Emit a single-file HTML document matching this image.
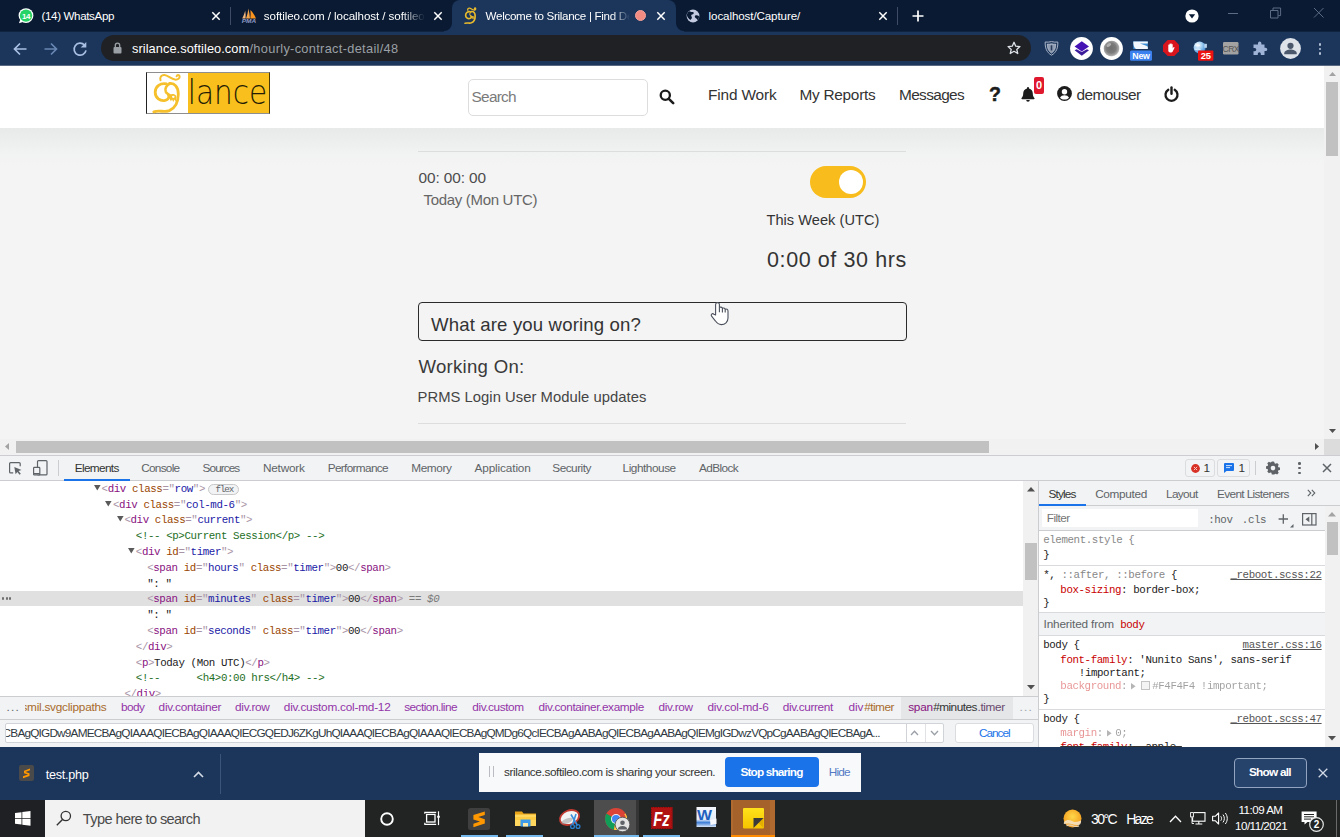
<!DOCTYPE html>
<html lang="en">
<head>
<meta charset="utf-8">
<title>Welcome to Srilance | Find Developers</title>
<style>
*{box-sizing:border-box;margin:0;padding:0}
html,body{width:1340px;height:837px;overflow:hidden;background:#f4f4f4}
body{position:relative;font-family:"Liberation Sans",sans-serif;color:#333}
.t{position:absolute;white-space:pre;line-height:1}
svg{position:absolute;overflow:visible}
</style>
</head>
<body>
<!-- sec_chrome -->
<div style="position:absolute;left:0px;top:0px;width:1340px;height:32px;background:#091a32;"></div>
<div style="position:absolute;left:0px;top:31px;width:1340px;height:35px;background:#1b355b;"></div>
<div style="position:absolute;left:0px;top:31px;width:444px;height:1px;background:#10243f;"></div>
<div style="position:absolute;left:684px;top:31px;width:656px;height:1px;background:#10243f;"></div>
<div style="position:absolute;left:452px;top:0px;width:224px;height:32px;background:#1b355b;border-radius:8px 8px 0 0;"></div>
<svg style="left:444px;top:23px;" width="8" height="8" viewBox="0 0 8 8"><path d="M8 0v8H0A8 8 0 0 0 8 0z" fill="#1b355b"/></svg>
<svg style="left:676px;top:23px;" width="8" height="8" viewBox="0 0 8 8"><path d="M0 0v8h8A8 8 0 0 1 0 0z" fill="#1b355b"/></svg>
<svg style="left:18px;top:8px;" width="16" height="16" viewBox="0 0 16 16"><circle cx="8" cy="7.6" r="7.4" fill="#fff"/><path d="M1 15.2l1.3-4 2.6 2.8z" fill="#fff"/><circle cx="8" cy="7.6" r="6.2" fill="#25d366"/><text x="8" y="10.6" font-family="Liberation Sans, sans-serif" font-size="8" font-weight="700" fill="#fff" text-anchor="middle" letter-spacing="-0.4">14</text></svg>
<span class="t" style="left:41.50px;top:10px;font-size:11.6px;letter-spacing:-0.365px;color:#fff;">(14) WhatsApp</span>
<svg style="left:210px;top:10px;" width="12" height="12" viewBox="0 0 12 12"><path d="M2.3 2.3L9.7 9.7M9.7 2.3L2.3 9.7" stroke="#fff" stroke-width="1.5" fill="none"/></svg>
<div style="position:absolute;left:230px;top:7px;width:1px;height:18px;background:#3f4c63;"></div>
<svg style="left:241px;top:8px;" width="16" height="16" viewBox="0 0 16 16"><path d="M1.200 10.400C2.600 8 3.600 5.500 4.200 2.600c.5 2.800.6 5.300.4 7.800z" fill="#f2b67c"/><path d="M5 10.400C6.300 7.300 7 4 7.300.600c.9 3.300 1.500 6.600 1.700 9.800z" fill="#f5a347"/><path d="M9.300 10.400c.4-2.800.4-5.600.1-8.400 2.400 2.400 4.300 5.200 5.600 8.400z" fill="#f7931e"/><text x="8" y="15.300" font-family="Liberation Sans, sans-serif" font-size="5.800" font-weight="700" font-style="italic" fill="#8e99c4" text-anchor="middle" textLength="14.500" lengthAdjust="spacingAndGlyphs">PMA</text></svg>
<div style="position:absolute;left:262px;top:0;width:164px;height:32px;overflow:hidden;-webkit-mask-image:linear-gradient(90deg,#000 140px,transparent 163px);mask-image:linear-gradient(90deg,#000 140px,transparent 163px)"><span class="t" style="left:1.80px;top:10px;font-size:11.6px;letter-spacing:-0.080px;color:#fff;">softileo.com / localhost / softileo.com</span></div>
<svg style="left:432px;top:10px;" width="12" height="12" viewBox="0 0 12 12"><path d="M2.3 2.3L9.7 9.7M9.7 2.3L2.3 9.7" stroke="#fff" stroke-width="1.5" fill="none"/></svg>
<svg style="left:460.6px;top:6.2px;" width="21" height="19" viewBox="0 0 21 19"><g transform="scale(.413)"><g fill="none" stroke="#e9ba2b" stroke-linecap="round" stroke-linejoin="round"><path d="M16.500 10.300C15.500 7 17.500 4.800 20.500 5c3.500.2 6.500 4.200 10.500 4.600 3 .3 5-1.400 4.600-3.400-.4-1.700-2.500-1.700-3 0" stroke-width="3.2"/><path d="M22.500 13.800c-6-1.200-11.300 2.400-11.300 8.400 0 5.800 5 9.300 10 8.200 3-.7 4.500-3.300 3.200-5.400" stroke-width="4"/><path d="M26 13.600c-3.600 1.600-5.600 5.200-4.200 8.200 1.200 2.400 4.200 2.600 5.400 5.200" stroke-width="2.600"/><path d="M25.500 13.500c5-.8 8.800 3.700 8.800 10.500 0 8-3 14-9 16.600-5 2-10-.6-15.500 1.200" stroke-width="4"/></g><path d="M25.800 25c1.500-1.600 5.400-1.300 6.300.8.700 1.700.2 3.800-.5 5.800l-1.300-2-1 2.400-1.200-2.400-1.300 1.600c-1.200-2-2-4.600-1-6.200z" fill="#e9ba2b"/><ellipse cx="29.300" cy="26.800" rx="1.300" ry="1.100" fill="#1b355b"/></g></svg>
<div style="position:absolute;left:484px;top:0;width:150px;height:32px;overflow:hidden;-webkit-mask-image:linear-gradient(90deg,#000 128px,transparent 146px);mask-image:linear-gradient(90deg,#000 128px,transparent 146px)"><span class="t" style="left:1.60px;top:10px;font-size:11.6px;letter-spacing:-0.300px;color:#fff;">Welcome to Srilance | Find Developers</span></div>
<svg style="left:634px;top:9px;" width="13" height="13" viewBox="0 0 13 13"><circle cx="6.5" cy="6.5" r="5" fill="#f28b82" stroke="#f4a29b" stroke-width="1"/></svg>
<svg style="left:654.5px;top:10px;" width="12" height="12" viewBox="0 0 12 12"><path d="M2.3 2.3L9.7 9.7M9.7 2.3L2.3 9.7" stroke="#fff" stroke-width="1.5" fill="none"/></svg>
<svg style="left:686px;top:9px;" width="14" height="14" viewBox="0 0 14 14"><circle cx="7" cy="7" r="6.4" fill="#c4cbe0"/><path d="M3.200 2.200c1.400.3 2 .9 3.300.8 1.200-.1 1.700 1 1 1.800-.7.700-2 .500-2.300 1.600-.2.900.9 1.300.7 2.300-.2.900-1 1.700-1.600 2.200-1.500-1-2.800-2.400-3.300-4.400C.7 5 1.700 3 3.200 2.200zM9.300 6.600c.9-.5 2.300-.3 3.600.3.300 1.300-.2 3-1.200 4.200-.6-.6-.6-1.400-1.500-1.700-1.300-.5-2-2.100-.9-2.800z" fill="#091a32"/></svg>
<span class="t" style="left:708.60px;top:10px;font-size:11.6px;letter-spacing:-0.107px;color:#fff;">localhost/Capture/</span>
<svg style="left:877px;top:10px;" width="12" height="12" viewBox="0 0 12 12"><path d="M2.3 2.3L9.7 9.7M9.7 2.3L2.3 9.7" stroke="#fff" stroke-width="1.5" fill="none"/></svg>
<div style="position:absolute;left:897px;top:7px;width:1px;height:18px;background:#3f4c63;"></div>
<svg style="left:912px;top:10px;" width="12" height="12" viewBox="0 0 12 12"><path d="M6 .5v11M.5 6h11" stroke="#fff" stroke-width="1.7"/></svg>
<svg style="left:1185px;top:9px;" width="14" height="14" viewBox="0 0 14 14"><circle cx="7" cy="7" r="6.600" fill="#fff"/><path d="M3.800 5.200h6.400L7 9.600z" fill="#091a32"/></svg>
<div style="position:absolute;left:1228px;top:13px;width:10px;height:1px;background:#5d6c84;"></div>
<svg style="left:1270px;top:7px;" width="12" height="12" viewBox="0 0 12 12"><path d="M.5 3.500h7.500v7.500h-7.500zM3 3.300V1h7.600v7.600H8.300" fill="none" stroke="#5d6c84" stroke-width="1"/></svg>
<svg style="left:1313px;top:7px;" width="12" height="12" viewBox="0 0 12 12"><path d="M1 1l9.500 9.500M10.500 1L1 10.500" fill="none" stroke="#5d6c84" stroke-width="1"/></svg>
<svg style="left:13px;top:41.5px;" width="15" height="14" viewBox="0 0 15 14"><path d="M13.500 7H1.800M7 1.500L1.500 7 7 12.500" fill="none" stroke="#a9c0e3" stroke-width="1.700"/></svg>
<svg style="left:43px;top:41.5px;" width="15" height="14" viewBox="0 0 15 14"><path d="M1.500 7h11.700M8 1.500L13.500 7 8 12.500" fill="none" stroke="#6a87b3" stroke-width="1.700"/></svg>
<svg style="left:72px;top:40.5px;" width="16" height="16" viewBox="0 0 16 16"><path d="M12.600 4.200A6 6 0 1 0 14 9.300" fill="none" stroke="#a9c0e3" stroke-width="1.700"/><path d="M14.300 1v5.600H8.700z" fill="#a9c0e3"/></svg>
<div style="position:absolute;left:100.5px;top:35px;width:930px;height:26px;background:#202124;border-radius:13px;"></div>
<div style="position:absolute;left:0px;top:65px;width:1340px;height:1px;background:#5a6983;"></div>
<svg style="left:113px;top:42px;" width="9" height="12" viewBox="0 0 9 12"><rect x=".5" y="5" width="8" height="6.500" rx="1" fill="#9aa0a6"/><path d="M2.300 5V3.400a2.200 2.200 0 0 1 4.400 0V5" fill="none" stroke="#9aa0a6" stroke-width="1.300"/></svg>
<span class="t" style="left:132.00px;top:43px;font-size:12.8px;letter-spacing:0.062px;color:#fff;">srilance.softileo.com</span>
<span class="t" style="left:249.50px;top:43px;font-size:12.8px;letter-spacing:0.311px;color:#9aa0a6;">/hourly-contract-detail/48</span>
<svg style="left:1007px;top:41px;" width="14" height="14" viewBox="0 0 14 14"><path d="M7 1.300l1.750 3.900 4.200.4-3.200 2.800 1 4.100L7 10.300 3.250 12.500l1-4.100L1.050 5.600l4.200-.4z" fill="none" stroke="#dfe3ea" stroke-width="1.300" stroke-linejoin="round"/></svg>
<svg style="left:1044px;top:40px;" width="15" height="16" viewBox="0 0 15 16"><path d="M7.500 1.600C5.500 2.200 3 2.300 1.200 2c-.3 5.500 1.300 10.500 6.300 13.200C12.500 12.500 14.100 7.500 13.800 2c-1.800.3-4.300.2-6.300-.4z" fill="#1b3459" stroke="#a9b5c8" stroke-width="1"/><path d="M7.500 3.800C6.200 4.200 4.600 4.300 3.300 4.100c-.1 3.800 1 7 4.200 9 3.200-2 4.300-5.200 4.200-9-1.300.2-2.900.1-4.200-.3z" fill="#8f9cb2" stroke="#c5cedb" stroke-width=".7"/><rect x="6.700" y="5.300" width="1.600" height="5.200" rx=".3" fill="#2b3d5c"/></svg>
<svg style="left:1069.5px;top:36.5px;" width="23" height="23" viewBox="0 0 23 23"><circle cx="11.500" cy="11.500" r="11.400" fill="#fff"/><path d="M4.600 13.300l2-1 5.200 2.700 5.200-2.700 2 1-7.200 5.500z" fill="#3b1d9c"/><path d="M11.800 4.300l7.200 5.300-7.200 5-7.200-5z" fill="#4512b4"/></svg>
<svg style="left:1099.5px;top:36.5px;" width="23" height="23" viewBox="0 0 23 23"><defs><radialGradient id="gs" cx=".46" cy=".46" r=".56"><stop offset="0" stop-color="#6f6f6f"/><stop offset=".55" stop-color="#7c7c7c"/><stop offset=".85" stop-color="#a9a9a9"/><stop offset="1" stop-color="#fff"/></radialGradient></defs><circle cx="11.500" cy="11.500" r="11.400" fill="#fff"/><circle cx="11.700" cy="11.700" r="8" fill="url(#gs)"/><ellipse cx="8.800" cy="8" rx="2.600" ry="1.600" transform="rotate(-35 8.800 8)" fill="#bdbdbd" opacity=".8"/></svg>
<svg style="left:1130px;top:40px;" width="22" height="21" viewBox="0 0 22 21"><rect x="3.300" y="1.400" width="14.500" height="7.600" fill="#3f8fd6"/><path d="M3.300 1.400h14.500v2H10c2.500 1.400 6 1.400 7.800 3.400v2.200H6C3.800 7.500 3.300 4.500 3.300 1.400z" fill="#f4f7fb"/><rect x="0" y="10.400" width="22" height="10.400" rx="1.500" fill="#3b82f0"/><text x="11" y="18.600" font-family="Liberation Sans, sans-serif" font-size="8.800" font-weight="700" fill="#fff" text-anchor="middle" letter-spacing="-0.2">New</text></svg>
<svg style="left:1163px;top:40px;" width="16" height="16" viewBox="0 0 16 16"><path d="M4.700 0h6.600L16 4.700v6.600L11.300 16H4.700L0 11.300V4.700z" fill="#d8141c"/><path d="M5.300 8.800V5.200c0-.8 1.100-.8 1.100 0V4.200c0-.8 1.100-.8 1.100 0v-.4c0-.8 1.100-.8 1.100 0v.8c0-.8 1.100-.8 1.100 0v4l.8-1.300c.4-.6 1.300-.1.900.6l-1.700 3.600c-.4.800-1 1.100-1.900 1.100H7.300c-1.200 0-2-.9-2-2z" fill="#fff"/></svg>
<svg style="left:1193px;top:40px;" width="21" height="21" viewBox="0 0 21 21"><defs><radialGradient id="gl" cx=".35" cy=".3" r=".8"><stop offset="0" stop-color="#fff"/><stop offset=".45" stop-color="#9fcdf2"/><stop offset="1" stop-color="#2f7fd0"/></radialGradient></defs><circle cx="6.600" cy="7.500" r="6" fill="url(#gl)"/><path d="M2 5c2-.5 3 1 5 .5M1.500 9c2 .8 4-.5 6 .5" stroke="#fff" stroke-width="1" fill="none" opacity=".8"/><rect x="11.300" y="3.800" width="2.600" height="4" fill="#b9d3ee"/><rect x="5" y="10.400" width="15.400" height="10.400" rx="1" fill="#ee1111"/><text x="12.700" y="19" font-family="Liberation Sans, sans-serif" font-size="9.400" font-weight="700" fill="#fff" text-anchor="middle" letter-spacing="-0.2">25</text></svg>
<svg style="left:1222.5px;top:42px;" width="15.5" height="12.5" viewBox="0 0 15.5 12.5"><rect width="15.500" height="12.500" rx="1.200" fill="#a2a2a2"/><text x="7.750" y="9.800" font-family="Liberation Sans, sans-serif" font-size="8.600" fill="#565656" text-anchor="middle" letter-spacing="-0.5">CRX</text></svg>
<svg style="left:1252px;top:41px;" width="16" height="15" viewBox="0 0 16 15"><path d="M6 2.200a1.700 1.700 0 0 1 3.400 0V3.500h3.100v3.200h1.100a1.700 1.700 0 0 1 0 3.400h-1.100V14H8.800v-1.200a1.500 1.500 0 0 0-3 0V14H1.500v-3.800h1.200a1.600 1.600 0 0 0 0-3.200H1.500V3.500H6z" fill="#9fb4d6"/></svg>
<svg style="left:1279.5px;top:37.5px;" width="21" height="21" viewBox="0 0 21 21"><circle cx="10.500" cy="10.500" r="10.400" fill="#dee3ea"/><circle cx="10.500" cy="7.800" r="3.100" fill="#4b586c"/><path d="M4.300 15.300c0-2.600 3.600-3.700 6.200-3.700s6.200 1.100 6.200 3.700v1H4.300z" fill="#4b586c"/></svg>
<div style="position:absolute;left:1318.6px;top:43.1px;width:2.8px;height:2.8px;background:#b3c0d6;border-radius:50%;"></div>
<div style="position:absolute;left:1318.6px;top:47.6px;width:2.8px;height:2.8px;background:#b3c0d6;border-radius:50%;"></div>
<div style="position:absolute;left:1318.6px;top:52.1px;width:2.8px;height:2.8px;background:#b3c0d6;border-radius:50%;"></div>
<!-- sec_page -->
<div style="position:absolute;left:0px;top:66px;width:1325px;height:374px;background:#f4f4f4;"></div>
<div style="position:absolute;left:0px;top:128px;width:1325px;height:38px;background:linear-gradient(#e8eaea,#eceded 30%,#f1f2f2 65%,#f4f4f4);"></div>
<div style="position:absolute;left:0px;top:66px;width:1325px;height:62px;background:#fff;"></div>
<div style="position:absolute;left:146px;top:72px;width:124px;height:42px;background:#fff;border:1px solid #8e8e8e;border-left-color:#222;border-right-color:#4a3a08;"></div>
<div style="position:absolute;left:188px;top:73px;width:81px;height:40px;background:#f9bf1c;"></div>
<svg style="left:144px;top:70px;" width="50" height="46" viewBox="0 0 50 46"><g fill="none" stroke="#f5c02c" stroke-linecap="round" stroke-linejoin="round"><path d="M16.500 10.300C15.500 7 17.500 4.800 20.500 5c3.500.2 6.500 4.200 10.500 4.600 3 .3 5-1.400 4.600-3.400-.4-1.700-2.500-1.700-3 0" stroke-width="2"/><path d="M22.500 13.800c-6-1.200-11.300 2.400-11.300 8.400 0 5.800 5 9.300 10 8.200 3-.7 4.500-3.300 3.200-5.400" stroke-width="2.800"/><path d="M26 13.600c-3.600 1.600-5.600 5.200-4.200 8.200 1.200 2.400 4.200 2.600 5.400 5.200" stroke-width="2.600"/><path d="M25.500 13.500c5-.8 8.800 3.700 8.800 10.500 0 8-3 14-9 16.600-5 2-10-.6-15.500 1.200" stroke-width="2.800"/></g><path d="M25.800 25c1.500-1.600 5.400-1.300 6.300.8.700 1.700.2 3.800-.5 5.800l-1.300-2-1 2.400-1.200-2.400-1.300 1.600c-1.200-2-2-4.600-1-6.200z" fill="#f5c02c"/><ellipse cx="29.300" cy="26.800" rx="1.300" ry="1.100" fill="#fff"/></svg>
<svg style="left:188px;top:73px" width="81" height="40" viewBox="0 0 81 40"><text x="-0.3" y="30.6" font-family="DejaVu Sans, Liberation Sans, sans-serif" font-weight="200" font-size="34" fill="#241c05" textLength="79.500" lengthAdjust="spacingAndGlyphs">lance</text></svg>
<div style="position:absolute;left:468px;top:79px;width:180px;height:37px;background:#fff;border:1px solid #ddd;border-radius:5px;"></div>
<span class="t" style="left:471.60px;top:89px;font-size:15.4px;letter-spacing:-0.761px;color:#7a7a7a;">Search</span>
<svg style="left:659px;top:89px;" width="16" height="16" viewBox="0 0 16 16"><circle cx="6.300" cy="6.300" r="4.600" fill="none" stroke="#1c1c1c" stroke-width="2.300"/><path d="M9.800 9.800l4.400 4.400" stroke="#1c1c1c" stroke-width="2.600" stroke-linecap="round"/></svg>
<span class="t" style="left:708.00px;top:87px;font-size:15.4px;letter-spacing:-0.144px;color:#333;">Find Work</span>
<span class="t" style="left:799.50px;top:87px;font-size:15.4px;letter-spacing:-0.276px;color:#333;">My Reports</span>
<span class="t" style="left:899.00px;top:87px;font-size:15.4px;letter-spacing:-0.636px;color:#333;">Messages</span>
<span class="t" style="left:989.00px;top:85px;font-size:19.5px;color:#1c1c1c;font-weight:700;-webkit-text-stroke:.5px #1c1c1c;">?</span>
<svg style="left:1021px;top:86px;" width="14" height="16" viewBox="0 0 14 16"><path d="M7 1a1 1 0 0 1 1 1v.6c2.400.5 3.800 2.500 3.800 5 0 2.500.8 3.600 1.600 4.400.4.400.1 1.200-.5 1.200H1.100c-.6 0-.9-.8-.5-1.200.8-.8 1.600-1.900 1.600-4.400 0-2.500 1.400-4.500 3.800-5V2a1 1 0 0 1 1-1zM5.200 14h3.600a1.800 1.800 0 0 1-3.600 0z" fill="#1c1c1c"/></svg>
<div style="position:absolute;left:1034px;top:77px;width:10px;height:16.5px;background:#e0182d;border-radius:2px;"></div>
<span class="t" style="left:1036.00px;top:80px;font-size:11px;color:#fff;font-weight:700;">0</span>
<svg style="left:1056.5px;top:86.2px;" width="15" height="15" viewBox="0 0 15 15"><circle cx="7.500" cy="7.500" r="7.400" fill="#1c1c1c"/><circle cx="7.500" cy="5.800" r="2.700" fill="#fff"/><path d="M3 11.700c.7-1.700 2.500-2.500 4.500-2.500s3.800.8 4.500 2.500c-1.100 1.200-2.700 1.900-4.500 1.900s-3.400-.7-4.500-1.900z" fill="#fff"/></svg>
<span class="t" style="left:1076.50px;top:87px;font-size:15.4px;letter-spacing:-0.545px;color:#333;">demouser</span>
<svg style="left:1163.5px;top:86px;" width="15" height="16" viewBox="0 0 15 16"><path d="M4.300 3.800A6 6 0 1 0 10.700 3.800" fill="none" stroke="#1c1c1c" stroke-width="2.300" stroke-linecap="round"/><path d="M7.500 1.400v6.400" stroke="#1c1c1c" stroke-width="2.400" stroke-linecap="round"/></svg>
<div style="position:absolute;left:418px;top:151px;width:488px;height:1px;background:#dcdddd;"></div>
<span class="t" style="left:418.50px;top:170px;font-size:15.4px;letter-spacing:-0.100px;color:#4d4d4d;">00: 00: 00</span>
<span class="t" style="left:423.50px;top:192px;font-size:15px;letter-spacing:-0.312px;color:#666;">Today (Mon UTC)</span>
<div style="position:absolute;left:810px;top:166px;width:56px;height:32px;background:#f8bd1c;border-radius:16px;"></div>
<div style="position:absolute;left:838.5px;top:170px;width:24px;height:24px;background:#fff;border-radius:50%;"></div>
<span class="t" style="left:766.50px;top:213px;font-size:14.6px;letter-spacing:0.031px;color:#333;">This Week (UTC)</span>
<span class="t" style="left:767.00px;top:250px;font-size:21.5px;letter-spacing:0.598px;color:#333;">0:00 of 30 hrs</span>
<div style="position:absolute;left:418px;top:302px;width:489px;height:39px;border:1px solid #2b2b2b;border-radius:4px;"></div>
<span class="t" style="left:431.00px;top:316px;font-size:18.6px;letter-spacing:0.142px;color:#333;">What are you woring on?</span>
<span class="t" style="left:418.50px;top:358px;font-size:18.6px;letter-spacing:0.267px;color:#3a3a3a;">Working On:</span>
<span class="t" style="left:417.50px;top:390px;font-size:14.8px;letter-spacing:0.037px;color:#444;">PRMS Login User Module updates</span>
<div style="position:absolute;left:418px;top:423px;width:488px;height:1px;background:#dcdddd;"></div>
<svg style="left:710px;top:302px;" width="20" height="24" viewBox="0 0 20 24"><path d="M5.600 13V2.400c0-2.200 3.800-2.200 3.800 0v2.900c1.400-.3 2.600.1 3 .8 1.100-.2 2.300.1 2.800.9 1.300-.2 2.800.4 2.800 2V16c0 4-3 6.600-6.700 6.600-2.700 0-4.400-1.500-6-3.800l-3.700-4.600c-1.200-1.700.7-3.300 2.300-2z" fill="#fff" stroke="#4b505c" stroke-width="1.100" stroke-linejoin="round"/><path d="M9.400 5.300v5M12.400 6.100v4.400M15.200 7v3.600" stroke="#4b505c" stroke-width="1.100" fill="none"/></svg>
<div style="position:absolute;left:1324px;top:66px;width:16px;height:373px;background:#f1f1f1;"></div>
<div style="position:absolute;left:1326px;top:82px;width:12px;height:74px;background:#c1c1c1;"></div>
<svg style="left:1328.5px;top:72px;" width="7" height="4" viewBox="0 0 7 4"><path d="M3.500 0l3.500 4H0z" fill="#a3a3a3"/></svg>
<svg style="left:1328.5px;top:428.5px;" width="7" height="4" viewBox="0 0 7 4"><path d="M3.500 4L0 0h7z" fill="#505050"/></svg>
<div style="position:absolute;left:0px;top:439px;width:1340px;height:17px;background:#f1f1f1;"></div>
<div style="position:absolute;left:16px;top:441px;width:973px;height:12px;background:#c1c1c1;"></div>
<svg style="left:5.3px;top:443.3px;" width="4" height="7" viewBox="0 0 4 7"><path d="M0 3.500L4 0v7z" fill="#a3a3a3"/></svg>
<svg style="left:1314.5px;top:443.3px;" width="4" height="7" viewBox="0 0 4 7"><path d="M4 3.500L0 0v7z" fill="#505050"/></svg>
<div style="position:absolute;left:1324px;top:439px;width:16px;height:17px;background:#dcdcdc;"></div>
<!-- sec_dev -->
<div style="position:absolute;left:0px;top:455px;width:1340px;height:292px;background:#fff;"></div>
<div style="position:absolute;left:0px;top:455px;width:1340px;height:26px;background:#f1f3f4;border-top:1px solid #cbcdd1;border-bottom:1px solid #cbcdd1;"></div>
<svg style="left:9px;top:462px;" width="13" height="13" viewBox="0 0 13 13"><path d="M11.200 4.200V1.700a1 1 0 0 0-1-1H1.600a1 1 0 0 0-1 1v8.200a1 1 0 0 0 1 1h2.600" fill="none" stroke="#5f6368" stroke-width="1.200"/><path d="M5.300 5l7.200 2.900-3 1.100 2.300 2.800-1.200 1-2.300-2.900-1.700 2.300z" fill="#5f6368"/></svg>
<svg style="left:33px;top:460px;" width="15" height="16" viewBox="0 0 15 16"><rect x="4.500" y=".600" width="9.500" height="14.300" rx="1" fill="none" stroke="#5f6368" stroke-width="1.200"/><rect x=".600" y="7.400" width="6.200" height="7.600" rx=".800" fill="#f1f3f4" stroke="#5f6368" stroke-width="1.200"/><path d="M.600 13.800h6.200" stroke="#5f6368" stroke-width="1.600"/></svg>
<div style="position:absolute;left:58px;top:460px;width:1px;height:16px;background:#cbcdd1;"></div>
<span class="t" style="left:74.80px;top:463px;font-size:11.8px;letter-spacing:-0.668px;color:#333;">Elements</span>
<span class="t" style="left:141.20px;top:463px;font-size:11.8px;letter-spacing:-0.720px;color:#5f6368;">Console</span>
<span class="t" style="left:202.60px;top:463px;font-size:11.8px;letter-spacing:-0.946px;color:#5f6368;">Sources</span>
<span class="t" style="left:263.00px;top:463px;font-size:11.8px;letter-spacing:-0.228px;color:#5f6368;">Network</span>
<span class="t" style="left:327.80px;top:463px;font-size:11.8px;letter-spacing:-0.677px;color:#5f6368;">Performance</span>
<span class="t" style="left:411.20px;top:463px;font-size:11.8px;letter-spacing:-0.381px;color:#5f6368;">Memory</span>
<span class="t" style="left:474.50px;top:463px;font-size:11.8px;letter-spacing:-0.135px;color:#5f6368;">Application</span>
<span class="t" style="left:552.30px;top:463px;font-size:11.8px;letter-spacing:-0.502px;color:#5f6368;">Security</span>
<span class="t" style="left:622.60px;top:463px;font-size:11.8px;letter-spacing:-0.462px;color:#5f6368;">Lighthouse</span>
<span class="t" style="left:699.00px;top:463px;font-size:11.8px;letter-spacing:-0.613px;color:#5f6368;">AdBlock</span>
<div style="position:absolute;left:64px;top:478.5px;width:66px;height:2px;background:#1a73e8;"></div>
<div style="position:absolute;left:1185px;top:459px;width:30px;height:18px;border:1px solid #dadce0;border-radius:3px;"></div>
<svg style="left:1191px;top:463.5px;" width="9" height="9" viewBox="0 0 9 9"><circle cx="4.500" cy="4.500" r="4.400" fill="#d93025"/><path d="M2.900 2.900l3.200 3.200M6.100 2.900L2.900 6.100" stroke="#f6c9c5" stroke-width="1"/></svg>
<span class="t" style="left:1203.60px;top:463px;font-size:11.8px;color:#333;">1</span>
<div style="position:absolute;left:1217px;top:459px;width:33px;height:18px;border:1px solid #dadce0;border-radius:3px;"></div>
<svg style="left:1224px;top:462.5px;" width="10" height="10" viewBox="0 0 10 10"><path d="M1 0h8a1 1 0 0 1 1 1v6a1 1 0 0 1-1 1H2.500L0 10V1a1 1 0 0 1 1-1z" fill="#1a73e8"/><path d="M2 2.600h6M2 4.600h4" stroke="#cfe0fb" stroke-width="1"/></svg>
<span class="t" style="left:1238.50px;top:463px;font-size:11.8px;color:#333;">1</span>
<div style="position:absolute;left:1255px;top:461px;width:1px;height:14px;background:#cbcdd1;"></div>
<svg style="left:1266px;top:461px;" width="14" height="14" viewBox="0 0 14 14"><path d="M7 0l1.300.2.400 1.700 1.200.5 1.500-.900 1.800 1.800-.900 1.500.500 1.200 1.700.400v2.600l-1.700.400-.500 1.200.900 1.500-1.800 1.800-1.500-.900-1.200.500L8.300 13.800H5.700l-.400-1.700-1.200-.500-1.500.900L.800 10.700l.900-1.500-.500-1.200L-.5 7.600V5l1.700-.400.500-1.200L.8 1.900 2.600.1l1.500.9 1.200-.5L5.700-.100z" transform="translate(.5 .6) scale(.93)" fill="#5f6368"/><circle cx="7" cy="7.100" r="2.300" fill="#f1f3f4"/></svg>
<div style="position:absolute;left:1298px;top:462.3px;width:2.6px;height:2.6px;background:#5f6368;border-radius:50%;"></div>
<div style="position:absolute;left:1298px;top:466.9px;width:2.6px;height:2.6px;background:#5f6368;border-radius:50%;"></div>
<div style="position:absolute;left:1298px;top:471.5px;width:2.6px;height:2.6px;background:#5f6368;border-radius:50%;"></div>
<svg style="left:1322px;top:463px;" width="10" height="10" viewBox="0 0 10 10"><path d="M1 1l8 8M9 1L1 9" stroke="#5f6368" stroke-width="1.500"/></svg>
<div style="position:absolute;left:0px;top:591px;width:1023px;height:15px;background:#e0e0e0;"></div>
<div style="position:absolute;left:0;top:481px;width:1023px;height:214.500px;overflow:hidden"><div style="position:absolute;left:0;top:-481px"><span class="t" style="left:101.60px;top:484px;font-family:'Liberation Mono',monospace;font-size:10.8px;letter-spacing:-0.4px;"><span style="color:#a894a6">&lt;</span><span style="color:#881280">div</span><span style="color:#a894a6"> </span><span style="color:#994500">class</span><span style="color:#a894a6">="</span><span style="color:#1a1aa6">row</span><span style="color:#a894a6">"</span><span style="color:#a894a6">&gt;</span></span>
<svg style="left:94.0px;top:485px;" width="7" height="6" viewBox="0 0 7 6"><path d="M0 0h6.600L3.300 5.400z" fill="#5a5a5a"/></svg>
<span class="t" style="left:113.00px;top:500px;font-family:'Liberation Mono',monospace;font-size:10.8px;letter-spacing:-0.4px;"><span style="color:#a894a6">&lt;</span><span style="color:#881280">div</span><span style="color:#a894a6"> </span><span style="color:#994500">class</span><span style="color:#a894a6">="</span><span style="color:#1a1aa6">col-md-6</span><span style="color:#a894a6">"</span><span style="color:#a894a6">&gt;</span></span>
<svg style="left:105.39999999999999px;top:501px;" width="7" height="6" viewBox="0 0 7 6"><path d="M0 0h6.600L3.300 5.400z" fill="#5a5a5a"/></svg>
<span class="t" style="left:124.40px;top:515px;font-family:'Liberation Mono',monospace;font-size:10.8px;letter-spacing:-0.4px;"><span style="color:#a894a6">&lt;</span><span style="color:#881280">div</span><span style="color:#a894a6"> </span><span style="color:#994500">class</span><span style="color:#a894a6">="</span><span style="color:#1a1aa6">current</span><span style="color:#a894a6">"</span><span style="color:#a894a6">&gt;</span></span>
<svg style="left:116.8px;top:516px;" width="7" height="6" viewBox="0 0 7 6"><path d="M0 0h6.600L3.300 5.400z" fill="#5a5a5a"/></svg>
<span class="t" style="left:135.80px;top:531px;font-family:'Liberation Mono',monospace;font-size:10.8px;letter-spacing:-0.4px;"><span style="color:#236e25">&lt;!-- &lt;p&gt;Current Session&lt;/p&gt; --&gt;</span></span>
<span class="t" style="left:135.80px;top:547px;font-family:'Liberation Mono',monospace;font-size:10.8px;letter-spacing:-0.4px;"><span style="color:#a894a6">&lt;</span><span style="color:#881280">div</span><span style="color:#a894a6"> </span><span style="color:#994500">id</span><span style="color:#a894a6">="</span><span style="color:#1a1aa6">timer</span><span style="color:#a894a6">"</span><span style="color:#a894a6">&gt;</span></span>
<svg style="left:128.2px;top:548px;" width="7" height="6" viewBox="0 0 7 6"><path d="M0 0h6.600L3.300 5.400z" fill="#5a5a5a"/></svg>
<span class="t" style="left:147.20px;top:563px;font-family:'Liberation Mono',monospace;font-size:10.8px;letter-spacing:-0.4px;"><span style="color:#a894a6">&lt;</span><span style="color:#881280">span</span><span style="color:#a894a6"> </span><span style="color:#994500">id</span><span style="color:#a894a6">="</span><span style="color:#1a1aa6">hours</span><span style="color:#a894a6">"</span><span style="color:#a894a6"> </span><span style="color:#994500">class</span><span style="color:#a894a6">="</span><span style="color:#1a1aa6">timer</span><span style="color:#a894a6">"</span><span style="color:#a894a6">&gt;</span><span style="color:#222">00</span><span style="color:#a894a6">&lt;/</span><span style="color:#881280">span</span><span style="color:#a894a6">&gt;</span></span>
<span class="t" style="left:147.20px;top:579px;font-family:'Liberation Mono',monospace;font-size:10.8px;letter-spacing:-0.4px;"><span style="color:#222">": "</span></span>
<span class="t" style="left:147.20px;top:594px;font-family:'Liberation Mono',monospace;font-size:10.8px;letter-spacing:-0.4px;"><span style="color:#a894a6">&lt;</span><span style="color:#881280">span</span><span style="color:#a894a6"> </span><span style="color:#994500">id</span><span style="color:#a894a6">="</span><span style="color:#1a1aa6">minutes</span><span style="color:#a894a6">"</span><span style="color:#a894a6"> </span><span style="color:#994500">class</span><span style="color:#a894a6">="</span><span style="color:#1a1aa6">timer</span><span style="color:#a894a6">"</span><span style="color:#a894a6">&gt;</span><span style="color:#222">00</span><span style="color:#a894a6">&lt;/</span><span style="color:#881280">span</span><span style="color:#a894a6">&gt;</span><span style="color:#7a7a7a;font-style:italic"> == $0</span></span>
<span class="t" style="left:147.20px;top:610px;font-family:'Liberation Mono',monospace;font-size:10.8px;letter-spacing:-0.4px;"><span style="color:#222">": "</span></span>
<span class="t" style="left:147.20px;top:626px;font-family:'Liberation Mono',monospace;font-size:10.8px;letter-spacing:-0.4px;"><span style="color:#a894a6">&lt;</span><span style="color:#881280">span</span><span style="color:#a894a6"> </span><span style="color:#994500">id</span><span style="color:#a894a6">="</span><span style="color:#1a1aa6">seconds</span><span style="color:#a894a6">"</span><span style="color:#a894a6"> </span><span style="color:#994500">class</span><span style="color:#a894a6">="</span><span style="color:#1a1aa6">timer</span><span style="color:#a894a6">"</span><span style="color:#a894a6">&gt;</span><span style="color:#222">00</span><span style="color:#a894a6">&lt;/</span><span style="color:#881280">span</span><span style="color:#a894a6">&gt;</span></span>
<span class="t" style="left:135.80px;top:642px;font-family:'Liberation Mono',monospace;font-size:10.8px;letter-spacing:-0.4px;"><span style="color:#a894a6">&lt;/</span><span style="color:#881280">div</span><span style="color:#a894a6">&gt;</span></span>
<span class="t" style="left:135.80px;top:658px;font-family:'Liberation Mono',monospace;font-size:10.8px;letter-spacing:-0.4px;"><span style="color:#a894a6">&lt;</span><span style="color:#881280">p</span><span style="color:#a894a6">&gt;</span><span style="color:#222">Today (Mon UTC)</span><span style="color:#a894a6">&lt;/</span><span style="color:#881280">p</span><span style="color:#a894a6">&gt;</span></span>
<span class="t" style="left:135.80px;top:673px;font-family:'Liberation Mono',monospace;font-size:10.8px;letter-spacing:-0.4px;"><span style="color:#236e25">&lt;!--      &lt;h4&gt;0:00 hrs&lt;/h4&gt; --&gt;</span></span>
<span class="t" style="left:124.40px;top:689px;font-family:'Liberation Mono',monospace;font-size:10.8px;letter-spacing:-0.4px;"><span style="color:#a894a6">&lt;/</span><span style="color:#881280">div</span><span style="color:#a894a6">&gt;</span></span></div></div>
<div style="position:absolute;left:208.4px;top:483.5px;width:30.6px;height:11.5px;background:#f1f3f4;border:1px solid #c8c8c8;border-radius:6px;"></div>
<span class="t" style="left:215.50px;top:485px;font-family:'Liberation Mono',monospace;font-size:9.2px;letter-spacing:-1.1px;"><span style="color:#5f6368">flex</span></span>
<div style="position:absolute;left:2.1999999999999997px;top:597.4px;width:2.2px;height:2.2px;background:#6e6e6e;border-radius:50%;"></div>
<div style="position:absolute;left:5.5px;top:597.4px;width:2.2px;height:2.2px;background:#6e6e6e;border-radius:50%;"></div>
<div style="position:absolute;left:8.8px;top:597.4px;width:2.2px;height:2.2px;background:#6e6e6e;border-radius:50%;"></div>
<div style="position:absolute;left:1023px;top:481px;width:15px;height:214.5px;background:#f1f1f1;"></div>
<div style="position:absolute;left:1025px;top:543px;width:11.6px;height:37px;background:#c1c1c1;"></div>
<svg style="left:1027px;top:486.5px;" width="8" height="5" viewBox="0 0 8 5"><path d="M4 0l4 4.500H0z" fill="#505050"/></svg>
<svg style="left:1027px;top:684.5px;" width="8" height="5" viewBox="0 0 8 5"><path d="M4 4.500L0 0h8z" fill="#505050"/></svg>
<div style="position:absolute;left:1038px;top:481px;width:1px;height:266px;background:#cbcdd1;"></div>
<div style="position:absolute;left:0px;top:695.5px;width:1038px;height:23.5px;background:#f1f3f4;border-top:1px solid #cbcdd1;"></div>
<span class="t" style="left:6.40px;top:702px;font-size:11.8px;letter-spacing:1.272px;color:#5f6368;">...</span>
<div style="position:absolute;left:25px;top:696px;width:90px;height:22px;overflow:hidden"><span class="t" style="left:-3.60px;top:6px;font-size:11.8px;letter-spacing:-0.241px;color:#a86a2c;">smil.svgclippaths</span></div>
<span class="t" style="left:121.00px;top:702px;font-size:11.8px;letter-spacing:-0.561px;color:#9334a8;">body</span>
<span class="t" style="left:158.60px;top:702px;font-size:11.8px;letter-spacing:-0.257px;color:#9334a8;">div.container</span>
<span class="t" style="left:235.10px;top:702px;font-size:11.8px;letter-spacing:-0.295px;color:#9334a8;">div.row</span>
<span class="t" style="left:283.80px;top:702px;font-size:11.8px;letter-spacing:-0.225px;color:#9334a8;">div.custom.col-md-12</span>
<span class="t" style="left:404.20px;top:702px;font-size:11.8px;letter-spacing:-0.514px;color:#9334a8;">section.line</span>
<span class="t" style="left:472.30px;top:702px;font-size:11.8px;letter-spacing:-0.420px;color:#9334a8;">div.custom</span>
<span class="t" style="left:538.60px;top:702px;font-size:11.8px;letter-spacing:-0.378px;color:#9334a8;">div.container.example</span>
<span class="t" style="left:658.60px;top:702px;font-size:11.8px;letter-spacing:-0.345px;color:#9334a8;">div.row</span>
<span class="t" style="left:707.50px;top:702px;font-size:11.8px;letter-spacing:-0.192px;color:#9334a8;">div.col-md-6</span>
<span class="t" style="left:782.70px;top:702px;font-size:11.8px;letter-spacing:-0.362px;color:#9334a8;">div.current</span>
<span class="t" style="left:848.50px;top:702px;font-size:11.8px;letter-spacing:-0.050px;color:#9334a8;">div</span>
<span class="t" style="left:864.20px;top:702px;font-size:11.8px;letter-spacing:-0.509px;color:#a86a2c;">#timer</span>
<div style="position:absolute;left:901.3px;top:696.5px;width:112px;height:22px;background:#e4e6e8;"></div>
<span class="t" style="left:908.20px;top:702px;font-size:11.8px;letter-spacing:-0.240px;color:#881280;">span</span>
<span class="t" style="left:933.20px;top:702px;font-size:11.8px;letter-spacing:-0.524px;color:#333;">#minutes</span>
<span class="t" style="left:977.50px;top:702px;font-size:11.8px;letter-spacing:-0.373px;color:#6a4a6e;">.timer</span>
<span class="t" style="left:1019.40px;top:702px;font-size:11.8px;letter-spacing:1.272px;color:#9aa0a6;">...</span>
<div style="position:absolute;left:0px;top:719px;width:1038px;height:28px;background:#f1f3f4;border-top:1px solid #cbcdd1;"></div>
<div style="position:absolute;left:4.5px;top:723px;width:939.5px;height:20px;background:#fff;border:1px solid #d0d3d7;border-radius:2px;"></div>
<div style="position:absolute;left:6px;top:724px;width:880px;height:18px;overflow:hidden"><span class="t" style="left:-3.40px;top:4px;font-size:11.8px;letter-spacing:-0.808px;color:#303942;">CBAgQIGDw9AMECBAgQIAAAQIECBAgQIAAAQIECGQEDJ6ZKgUhQIAAAQIECBAgQIAAAQIECBAgQMDg6QcIECBAgAABAgQIECBAgAABAgQIEMgIGDwzVQpCgAABAgQIECBAgA...</span></div>
<div style="position:absolute;left:905.5px;top:723px;width:1px;height:20px;background:#d0d3d7;"></div>
<div style="position:absolute;left:924.5px;top:724px;width:1px;height:18px;background:#e0e2e5;"></div>
<svg style="left:910px;top:730px;" width="9" height="6" viewBox="0 0 9 6"><path d="M1 5l3.500-3.800L8 5" fill="none" stroke="#9aa0a6" stroke-width="1.300"/></svg>
<svg style="left:930px;top:730px;" width="9" height="6" viewBox="0 0 9 6"><path d="M1 1l3.500 3.800L8 1" fill="none" stroke="#9aa0a6" stroke-width="1.300"/></svg>
<div style="position:absolute;left:955px;top:723px;width:78.5px;height:20px;background:#fff;border:1px solid #dadce0;border-radius:3px;"></div>
<span class="t" style="left:979.00px;top:728px;font-size:11.8px;letter-spacing:-1.020px;color:#1a73e8;">Cancel</span>
<!-- sec_styles -->
<div style="position:absolute;left:1039px;top:481px;width:301px;height:25px;background:#f1f3f4;border-bottom:1px solid #cbcdd1;"></div>
<span class="t" style="left:1048.60px;top:489px;font-size:11.8px;letter-spacing:-0.885px;color:#333;">Styles</span>
<span class="t" style="left:1095.20px;top:489px;font-size:11.8px;letter-spacing:-0.338px;color:#5f6368;">Computed</span>
<span class="t" style="left:1166.00px;top:489px;font-size:11.8px;letter-spacing:-0.648px;color:#5f6368;">Layout</span>
<span class="t" style="left:1217.00px;top:489px;font-size:11.8px;letter-spacing:-0.629px;color:#5f6368;">Event Listeners</span>
<div style="position:absolute;left:1039px;top:503.8px;width:47px;height:2px;background:#1a73e8;"></div>
<svg style="left:1307px;top:489px;" width="9" height="8" viewBox="0 0 9 8"><path d="M.800 .800l3 3.200-3 3.200M4.800 .800l3 3.200-3 3.200" fill="none" stroke="#5f6368" stroke-width="1.100"/></svg>
<div style="position:absolute;left:1039px;top:506px;width:286px;height:24.5px;background:#f1f3f4;border-bottom:1px solid #cbcdd1;"></div>
<div style="position:absolute;left:1042px;top:509px;width:155.5px;height:18px;background:#fff;"></div>
<span class="t" style="left:1046.80px;top:513px;font-size:11.8px;letter-spacing:-0.557px;color:#757575;">Filter</span>
<span class="t" style="left:1208.20px;top:515px;font-family:'Liberation Mono',monospace;font-size:10.8px;letter-spacing:-0.4px;"><span style="color:#5f6368">:hov</span></span>
<span class="t" style="left:1241.80px;top:515px;font-family:'Liberation Mono',monospace;font-size:10.8px;letter-spacing:-0.4px;"><span style="color:#5f6368">.cls</span></span>
<svg style="left:1278px;top:513.5px;" width="11" height="10" viewBox="0 0 11 10"><path d="M5.300 .300v9.400M.600 5h9.400" stroke="#5f6368" stroke-width="1.300"/></svg>
<svg style="left:1290px;top:524px;" width="4" height="4" viewBox="0 0 4 4"><path d="M3.500 0v3.500H0z" fill="#5f6368"/></svg>
<svg style="left:1302px;top:512.5px;" width="15" height="13" viewBox="0 0 15 13"><rect x=".600" y=".600" width="13.400" height="11.400" fill="none" stroke="#5f6368" stroke-width="1.200"/><path d="M9.800 .600v11.400" stroke="#5f6368" stroke-width="1.200"/><path d="M7.300 3.400v5.800L3.500 6.300z" fill="#5f6368"/></svg>
<div style="position:absolute;left:1325px;top:506px;width:15px;height:241px;background:#f1f1f1;"></div>
<div style="position:absolute;left:1326.5px;top:522px;width:11.5px;height:32.5px;background:#c1c1c1;"></div>
<svg style="left:1328px;top:511.5px;" width="8" height="5" viewBox="0 0 8 5"><path d="M4 0l4 4.500H0z" fill="#a3a3a3"/></svg>
<svg style="left:1328px;top:736px;" width="8" height="5" viewBox="0 0 8 5"><path d="M4 4.500L0 0h8z" fill="#505050"/></svg>
<div style="position:absolute;left:1039px;top:564.5px;width:286px;height:1px;background:#d8dadd;"></div>
<div style="position:absolute;left:1039px;top:612px;width:286px;height:24px;background:#f1f3f4;border-top:1px solid #d8dadd;border-bottom:1px solid #d8dadd;"></div>
<span class="t" style="left:1043.60px;top:619px;font-size:11.8px;letter-spacing:-0.173px;color:#5f6368;">Inherited from</span>
<svg style="left:1130.8px;top:682.5px;" width="5" height="7" viewBox="0 0 5 7"><path d="M0 0l4.600 3.300L0 6.600z" fill="#b5b5b5"/></svg>
<div style="position:absolute;left:1141px;top:681px;width:9px;height:9px;background:#f4f4f4;border:1px solid #c4c4c4;"></div>
<div style="position:absolute;left:1039px;top:709px;width:286px;height:1px;background:#d8dadd;"></div>
<svg style="left:1106.5px;top:729.6px;" width="5" height="7" viewBox="0 0 5 7"><path d="M0 0l4.600 3.300L0 6.600z" fill="#b5b5b5"/></svg>
<div style="position:absolute;left:1039px;top:531px;width:286px;height:215.500px;overflow:hidden"><div style="position:absolute;left:-1039px;top:-531px"><span class="t" style="left:1043.20px;top:535px;font-family:'Liberation Mono',monospace;font-size:10.8px;letter-spacing:-0.4px;"><span style="color:#888">element.style {</span></span>
<span class="t" style="left:1043.20px;top:550px;font-family:'Liberation Mono',monospace;font-size:10.8px;letter-spacing:-0.4px;"><span style="color:#222">}</span></span>
<span class="t" style="left:1043.20px;top:570px;font-family:'Liberation Mono',monospace;font-size:10.8px;letter-spacing:-0.4px;"><span style="color:#222">*, </span><span style="color:#888">::after, ::before</span><span style="color:#222"> {</span></span>
<span class="t" style="left:1230.40px;top:570px;font-family:'Liberation Mono',monospace;font-size:10.8px;letter-spacing:-0.4px;"><span style="color:#555;text-decoration:underline">_reboot.scss:22</span></span>
<span class="t" style="left:1060.30px;top:585px;font-family:'Liberation Mono',monospace;font-size:10.8px;letter-spacing:-0.4px;"><span style="color:#c80000">box-sizing</span><span style="color:#222">: </span><span style="color:#222">border-box</span><span style="color:#222">;</span></span>
<span class="t" style="left:1043.20px;top:598px;font-family:'Liberation Mono',monospace;font-size:10.8px;letter-spacing:-0.4px;"><span style="color:#222">}</span></span>
<span class="t" style="left:1120.20px;top:620px;font-family:'Liberation Mono',monospace;font-size:10.8px;letter-spacing:-0.4px;"><span style="color:#c80000">body</span></span>
<span class="t" style="left:1043.20px;top:640px;font-family:'Liberation Mono',monospace;font-size:10.8px;letter-spacing:-0.4px;"><span style="color:#222">body {</span></span>
<span class="t" style="left:1242.60px;top:640px;font-family:'Liberation Mono',monospace;font-size:10.8px;letter-spacing:-0.4px;"><span style="color:#555;text-decoration:underline">master.css:16</span></span>
<span class="t" style="left:1060.30px;top:655px;font-family:'Liberation Mono',monospace;font-size:10.8px;letter-spacing:-0.4px;"><span style="color:#c80000">font-family</span><span style="color:#222">: </span><span style="color:#222">'Nunito Sans', sans-serif</span></span>
<span class="t" style="left:1078.80px;top:668px;font-family:'Liberation Mono',monospace;font-size:10.8px;letter-spacing:-0.4px;"><span style="color:#222">!important;</span></span>
<span class="t" style="left:1060.30px;top:681px;font-family:'Liberation Mono',monospace;font-size:10.8px;letter-spacing:-0.4px;opacity:.42;"><span style="color:#c80000">background</span><span style="color:#222">:</span></span>
<span class="t" style="left:1152.20px;top:681px;font-family:'Liberation Mono',monospace;font-size:10.8px;letter-spacing:-0.4px;opacity:.42;"><span style="color:#222">#F4F4F4 !important;</span></span>
<span class="t" style="left:1043.20px;top:694px;font-family:'Liberation Mono',monospace;font-size:10.8px;letter-spacing:-0.4px;"><span style="color:#222">}</span></span>
<span class="t" style="left:1043.20px;top:714px;font-family:'Liberation Mono',monospace;font-size:10.8px;letter-spacing:-0.4px;"><span style="color:#222">body {</span></span>
<span class="t" style="left:1230.40px;top:714px;font-family:'Liberation Mono',monospace;font-size:10.8px;letter-spacing:-0.4px;"><span style="color:#555;text-decoration:underline">_reboot.scss:47</span></span>
<span class="t" style="left:1060.30px;top:728px;font-family:'Liberation Mono',monospace;font-size:10.8px;letter-spacing:-0.4px;opacity:.42;"><span style="color:#c80000">margin</span><span style="color:#222">:</span></span>
<span class="t" style="left:1115.20px;top:728px;font-family:'Liberation Mono',monospace;font-size:10.8px;letter-spacing:-0.4px;opacity:.42;"><span style="color:#222">0;</span></span>
<span class="t" style="left:1060.30px;top:742px;font-family:'Liberation Mono',monospace;font-size:10.8px;letter-spacing:-0.4px;text-decoration:line-through;"><span style="color:#c80000">font-family</span><span style="color:#222">: -apple-</span></span></div></div>
<!-- sec_bottom -->
<div style="position:absolute;left:0px;top:747px;width:1340px;height:53px;background:#1b355b;"></div>
<svg style="left:19px;top:765px;" width="15" height="16" viewBox="0 0 15 16"><rect width="15" height="16" rx="2" fill="#4a4a4a"/><path d="M11 3.600L5 5.700v2.500l4 1.300-5 1.700v2l6.500-2.300V8.200l-4-1.300L11 5.300z" fill="#ff9800"/></svg>
<span class="t" style="left:45.80px;top:769px;font-size:12.6px;letter-spacing:-0.258px;color:#fff;">test.php</span>
<svg style="left:193px;top:771px;" width="11" height="7" viewBox="0 0 11 7"><path d="M1 6l4.500-4.500L10 6" fill="none" stroke="#d5dbe6" stroke-width="1.600"/></svg>
<div style="position:absolute;left:219.5px;top:753.5px;width:1px;height:40px;background:#3b5479;"></div>
<div style="position:absolute;left:479px;top:752.5px;width:382px;height:39px;background:#f8f9fa;"></div>
<div style="position:absolute;left:488.6px;top:766px;width:1.2px;height:10.5px;background:#b9bcc1;"></div>
<div style="position:absolute;left:492.6px;top:766px;width:1.2px;height:10.5px;background:#b9bcc1;"></div>
<span class="t" style="left:504.00px;top:767px;font-size:11.8px;letter-spacing:-0.392px;color:#333;">srilance.softileo.com is sharing your screen.</span>
<div style="position:absolute;left:725px;top:757px;width:94px;height:30px;background:#1a73e8;border-radius:4px;"></div>
<span class="t" style="left:740.40px;top:767px;font-size:11.8px;letter-spacing:-0.826px;color:#fff;font-weight:700;">Stop sharing</span>
<span class="t" style="left:828.80px;top:767px;font-size:11.8px;letter-spacing:-0.834px;color:#5579c6;">Hide</span>
<div style="position:absolute;left:1234px;top:758px;width:73px;height:30px;background:#26436c;border:1px solid #93a4c0;border-radius:4px;"></div>
<span class="t" style="left:1249.00px;top:767px;font-size:11.8px;letter-spacing:-0.753px;color:#fff;font-weight:700;">Show all</span>
<svg style="left:1318px;top:768px;" width="10" height="10" viewBox="0 0 10 10"><path d="M.700 .700l8.600 8.600M9.300 .700L.700 9.300" stroke="#d3dae6" stroke-width="1.300"/></svg>
<div style="position:absolute;left:0px;top:800px;width:1340px;height:37px;background:#222424;"></div>
<div style="position:absolute;left:0px;top:800px;width:45px;height:37px;background:#1f2023;"></div>
<svg style="left:14.5px;top:811px;" width="16" height="15" viewBox="0 0 16 15"><path d="M0 2.100L6.500 1.200V7H0zM7.300 1.100L15.500 0v7H7.300zM0 7.800h6.500v5.800L0 12.700zM7.300 7.800h8.200v7L7.300 13.700z" fill="#fff"/></svg>
<div style="position:absolute;left:45px;top:800px;width:320px;height:37px;background:#f2f2f2;"></div>
<svg style="left:55.5px;top:810px;" width="16" height="16" viewBox="0 0 16 16"><circle cx="9.800" cy="6" r="4.700" fill="none" stroke="#333" stroke-width="1.300"/><path d="M6.500 9.500L.800 15.200" stroke="#333" stroke-width="1.400"/></svg>
<span class="t" style="left:82.80px;top:812px;font-size:14.6px;letter-spacing:-0.620px;color:#4a4a4a;">Type here to search</span>
<svg style="left:380px;top:811.5px;" width="14" height="14" viewBox="0 0 14 14"><circle cx="7" cy="7" r="5.800" fill="none" stroke="#fff" stroke-width="1.900"/></svg>
<svg style="left:423.5px;top:810.5px;" width="16" height="15" viewBox="0 0 16 15"><rect x="2.600" y="3.400" width="8.400" height="7.600" fill="none" stroke="#fff" stroke-width="1.300"/><path d="M.800 2.800V1.300h11.400M.800 11.800v1.500h11.400" fill="none" stroke="#fff" stroke-width="1.200"/><path d="M14.500 .300v13.800" stroke="#fff" stroke-width="1.200"/><circle cx="14.500" cy="5.800" r="1.400" fill="#fff"/></svg>
<svg style="left:468px;top:807.5px;" width="22" height="22" viewBox="0 0 22 22"><rect width="22" height="22" rx="2.500" fill="#3f3f3f"/><path d="M16.800 3.400L5.400 7.100v4.300l6.600 2.200-6.600 2.200v3.500l11.400-3.700v-4.300l-6.600-2.200 6.600-2.200z" fill="#ff9800"/></svg>
<div style="position:absolute;left:460.5px;top:834.5px;width:37.5px;height:2.5px;background:#76b9ed;"></div>
<svg style="left:514.5px;top:810px;" width="21" height="17" viewBox="0 0 21 17"><path d="M0 1.500h7l1.500 2H21V16H0z" fill="#e8a317"/><path d="M0 4.500h21V16H0z" fill="#ffd75e"/><path d="M0 7h21v3H0z" fill="#fbc531" opacity=".6"/><rect x="5.500" y="9.500" width="10" height="7" fill="#3d9be9"/><rect x="8" y="13" width="5" height="3.500" fill="#ffe9a6"/></svg>
<div style="position:absolute;left:506px;top:834.5px;width:37px;height:2.5px;background:#76b9ed;"></div>
<svg style="left:559px;top:808px;" width="24" height="21" viewBox="0 0 24 21"><ellipse cx="10.500" cy="9.500" rx="10" ry="7" transform="rotate(-22 10.500 9.500)" fill="#f3f3f3" stroke="#c23a30" stroke-width="1.800"/><ellipse cx="8" cy="13" rx="6" ry="2.500" transform="rotate(-22 8 13)" fill="#9a9a9a" opacity=".55"/><path d="M12 6.500l6.500 11M17 6l-3.500 11" stroke="#3a8edb" stroke-width="1.600"/><circle cx="19" cy="18.500" r="1.900" fill="none" stroke="#2a7fd0" stroke-width="1.300"/><circle cx="13.500" cy="18.500" r="1.900" fill="none" stroke="#2a7fd0" stroke-width="1.300"/></svg>
<div style="position:absolute;left:593.5px;top:800px;width:42px;height:37px;background:#4d4d4d;"></div>
<div style="position:absolute;left:635.5px;top:800px;width:3px;height:37px;background:#353535;"></div>
<svg style="left:605px;top:807.5px;" width="22" height="22" viewBox="0 0 22 22"><circle cx="11" cy="11" r="11" fill="#db4437"/><path d="M11 11L1.500 5.500A11 11 0 0 0 9 21.800z" fill="#0f9d58"/><path d="M11 11l-2 10.800A11 11 0 0 0 20.500 5.500z" fill="#ffcd40"/><path d="M11 11h10A11 11 0 0 0 1.500 5.500z" fill="#db4437"/><circle cx="11" cy="11" r="5" fill="#f1f1f1"/><circle cx="11" cy="11" r="4" fill="#4285f4"/></svg>
<svg style="left:615px;top:817px;" width="15" height="15" viewBox="0 0 15 15"><circle cx="7.500" cy="7.500" r="7.300" fill="#e4e4e4" stroke="#4d4d4d" stroke-width=".800"/><circle cx="7.500" cy="5.700" r="2.300" fill="#5f6368"/><path d="M3 11.700c0-2 3-2.800 4.500-2.800s4.500.8 4.500 2.800v.8H3z" fill="#5f6368"/></svg>
<div style="position:absolute;left:593.5px;top:834.5px;width:45px;height:2.5px;background:#76b9ed;"></div>
<svg style="left:650.8px;top:807px;" width="21.5" height="22" viewBox="0 0 21.5 22"><rect width="21.500" height="22" fill="#b01212"/><rect x=".500" y=".500" width="20.500" height="21" fill="none" stroke="#8a0c0c" stroke-width="1" stroke-dasharray="1.500 1"/><text x="2.200" y="18.600" font-family="Liberation Sans, sans-serif" font-size="19.500" font-weight="700" font-style="italic" fill="#fff" textLength="16.500" lengthAdjust="spacingAndGlyphs">Fz</text></svg>
<div style="position:absolute;left:643px;top:834.5px;width:37px;height:2.5px;background:#76b9ed;"></div>
<svg style="left:696px;top:807px;" width="21" height="20.5" viewBox="0 0 21 20.5"><defs><linearGradient id="wd" x1="0" y1="0" x2="0" y2="1"><stop offset="0" stop-color="#f4f7fc"/><stop offset=".62" stop-color="#e3ecf8"/><stop offset=".78" stop-color="#3f7fd6"/><stop offset="1" stop-color="#dbe7f7"/></linearGradient></defs><path d="M.500 0h19.500v20H.500z" fill="url(#wd)"/><path d="M14 13l6.500-1.500v5.500L14.500 18z" fill="#f8fafd"/><text x="1" y="13.200" font-family="Liberation Sans, sans-serif" font-size="14.500" font-weight="700" fill="#1f5fbf" textLength="15" lengthAdjust="spacingAndGlyphs">W</text></svg>
<div style="position:absolute;left:730.5px;top:800px;width:44.5px;height:37px;background:#a5622b;"></div>
<div style="position:absolute;left:730.5px;top:800px;width:2.5px;height:34.5px;background:#b06a2f;"></div>
<div style="position:absolute;left:770px;top:800px;width:5px;height:34.5px;background:#b06a2f;"></div>
<svg style="left:742.5px;top:808px;" width="21" height="20.5" viewBox="0 0 21 20.5"><defs><linearGradient id="sn" x1="0" y1="0" x2="0" y2="1"><stop offset="0" stop-color="#ffe21a"/><stop offset="1" stop-color="#f5c400"/></linearGradient></defs><rect width="21" height="20.500" rx="1" fill="url(#sn)"/><path d="M10.500 10h10v10z" fill="#e3ae00"/><path d="M10.500 10h10l-10 10z" fill="#3a3a3a"/></svg>
<div style="position:absolute;left:730.5px;top:834.5px;width:44.5px;height:2.5px;background:#ff8c00;"></div>
<svg style="left:1063px;top:809px;" width="19" height="19" viewBox="0 0 19 19"><defs><radialGradient id="sun" cx=".5" cy=".4" r=".6"><stop offset="0" stop-color="#ffd84a"/><stop offset="1" stop-color="#f29a1c"/></radialGradient></defs><circle cx="9.500" cy="9.500" r="9" fill="url(#sun)"/><path d="M1.500 12.500c2-2 5-2 7.500-.5s6 1 9-.5c.3 1.500-.3 3-1 4-3 1-6 .5-8.500-.500S3.500 14.500 1 15c-.3-.8-.2-1.700.5-2.500z" fill="#f3dfc0" opacity=".92"/><path d="M3.500 16.500c2-.8 4.500-.5 6.500.3s4 .8 6 0" stroke="#e9cfa8" stroke-width="1.400" fill="none"/></svg>
<span class="t" style="left:1091.00px;top:812px;font-size:14px;letter-spacing:-1.557px;color:#fff;">30°C</span>
<span class="t" style="left:1126.20px;top:812px;font-size:14px;letter-spacing:-1.699px;color:#fff;">Haze</span>
<svg style="left:1169px;top:814.5px;" width="13" height="8" viewBox="0 0 13 8"><path d="M1 7l5.500-5.800L12 7" fill="none" stroke="#fff" stroke-width="1.300"/></svg>
<svg style="left:1190px;top:812px;" width="16" height="13" viewBox="0 0 16 13"><rect x="2.600" y=".600" width="12.400" height="8.600" fill="none" stroke="#fff" stroke-width="1.100"/><path d="M8.800 9.200v2.500M5.500 12h6.800" stroke="#fff" stroke-width="1.100"/><rect x="0" y="0" width="4" height="5.500" fill="#222424"/><rect x=".600" y=".600" width="2.800" height="4.300" fill="none" stroke="#fff" stroke-width=".9"/><path d="M2 5v6.500h2" stroke="#fff" stroke-width=".9" fill="none"/></svg>
<svg style="left:1212px;top:812px;" width="17" height="13" viewBox="0 0 17 13"><path d="M.600 4.300h2.600L6.600 1v11L3.200 8.700H.600z" fill="none" stroke="#fff" stroke-width="1.100" stroke-linejoin="round"/><path d="M8.800 4.300c1 1.200 1 3.200 0 4.400M11 2.600c1.800 2.200 1.800 5.600 0 7.800M13.300 1c2.600 3.200 2.600 7.800 0 11" fill="none" stroke="#fff" stroke-width="1"/></svg>
<span class="t" style="left:1238.50px;top:804px;font-size:11.6px;letter-spacing:-0.515px;color:#fff;">11:09 AM</span>
<span class="t" style="left:1235.00px;top:820px;font-size:11.6px;letter-spacing:-0.502px;color:#fff;">10/11/2021</span>
<svg style="left:1301px;top:811px;" width="17" height="14" viewBox="0 0 17 14"><path d="M.600 .600h15v10.400H6.500L3.500 13.500V11H.600z" fill="#fff"/><path d="M3 3.500h10M3 5.800h10M3 8.100h7" stroke="#222424" stroke-width="1"/></svg>
<svg style="left:1308.5px;top:817px;" width="15" height="15" viewBox="0 0 15 15"><circle cx="7.500" cy="7.500" r="6.800" fill="#222424" stroke="#e6e6e6" stroke-width="1.200"/><text x="7.500" y="11.200" font-family="Liberation Sans, sans-serif" font-size="10" font-weight="700" fill="#fff" text-anchor="middle">2</text></svg>
<div style="position:absolute;left:1335.5px;top:800px;width:1px;height:37px;background:#6a6a6a;"></div>
</body>
</html>
